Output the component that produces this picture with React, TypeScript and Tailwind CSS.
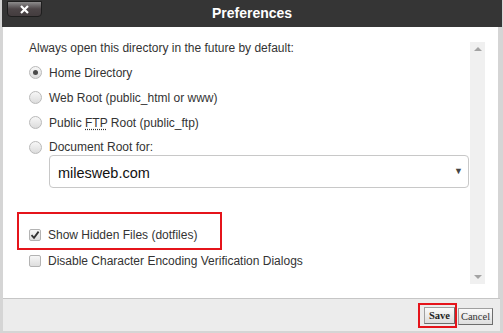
function Radio({ checked = false }: { checked?: boolean }) {
  return (
    <span className="flex h-[13px] w-[13px] shrink-0 items-center justify-center rounded-full border border-[#b9b9b9] bg-gradient-to-b from-[#f7f7f7] to-[#dcdcdc]">
      {checked && <span className="h-[5px] w-[5px] rounded-full bg-[#4a4a4a]" />}
    </span>
  );
}

function Checkbox({ checked = false }: { checked?: boolean }) {
  return (
    <span className="flex h-[12px] w-[12px] shrink-0 items-center justify-center rounded-[2px] border border-[#b3b3b3] bg-gradient-to-b from-[#f7f7f7] to-[#dedede]">
      {checked && (
        <svg width="10" height="10" viewBox="0 0 10 10">
          <path d="M1.5 5.2 L4 7.8 L8.6 1.6" fill="none" stroke="#333" strokeWidth="1.8" />
        </svg>
      )}
    </span>
  );
}

const dirs = [
  { label: "Home Directory", checked: true },
  { label: "Web Root (public_html or www)" },
];

export default function App() {
  return (
    <div className="relative h-[333px] w-[503px] overflow-hidden bg-[#d5d5d5] font-['Liberation_Sans',Arial,sans-serif] text-[12px] text-[#333]">
      {/* title bar */}
      <div className="relative ml-[2px] flex h-[27px] w-[500px] items-center justify-center bg-[#353535]">
        <button className="absolute left-[5px] top-[1px] flex h-[16px] w-[35px] items-center justify-center rounded-b-[4px] border border-[#1e1e1e] bg-gradient-to-b from-[#8d8d8d] via-[#4d4648] to-[#433c3e]">
          <svg width="9" height="9" viewBox="0 0 9 9">
            <path d="M1 1 L8 8 M8 1 L1 8" stroke="#fff" strokeWidth="2.2" />
          </svg>
        </button>
        <h1 className="text-[14px] font-bold text-white">Preferences</h1>
      </div>

      {/* body */}
      <div className="ml-[3px] flex h-[271px] w-[495px] bg-white">
        <div className="flex-1 pl-[14px] pt-[13px]">
          <p className="h-[20px] pl-[12px] leading-[16px]">
            Always open this directory in the future by default:
          </p>
          {dirs.map((d) => (
            <label key={d.label} className="flex h-[25px] items-center gap-[7px] pl-[12px]">
              <Radio checked={d.checked} />
              <span>{d.label}</span>
            </label>
          ))}
          <label className="flex h-[25px] items-center gap-[7px] pl-[12px]">
            <Radio />
            <span>
              Public <abbr className="underline decoration-dotted underline-offset-2">FTP</abbr> Root (public_ftp)
            </span>
          </label>
          <label className="flex h-[24px] items-center gap-[7px] pl-[12px]">
            <Radio />
            <span>Document Root for:</span>
          </label>
          <div className="-mt-[4px] ml-[32px] flex h-[33px] w-[420px] items-center justify-between rounded-[4px] border border-[#c8c8c8] pl-[8px] pr-[5px] pt-[4px]">
            <span className="text-[14.5px] text-[#111]">milesweb.com</span>
            <span className="-mt-[4px] text-[9px] text-[#444]">▼</span>
          </div>

          <div className="mt-[24px] flex h-[38px] w-[205px] items-center gap-[7px] border-2 border-[#e5141b] pl-[10px] pt-[8px]">
            <Checkbox checked />
            <span>Show Hidden Files (dotfiles)</span>
          </div>
          <label className="flex h-[21px] items-center gap-[7px] pl-[12px]">
            <Checkbox />
            <span>Disable Character Encoding Verification Dialogs</span>
          </label>
        </div>

        {/* scrollbar */}
        <div className="mb-[14px] mr-[13px] mt-[15px] flex w-[15px] flex-col items-center justify-between bg-[#f0f0f0] py-[5px]">
          <span className="h-0 w-0 border-x-[4px] border-b-[4px] border-x-transparent border-b-[#a3a3a3]" />
          <span className="h-0 w-0 border-x-[4px] border-t-[4px] border-x-transparent border-t-[#a3a3a3]" />
        </div>
      </div>

      {/* footer */}
      <div className="ml-[3px] flex h-[33px] w-[497px] items-start justify-end gap-[1px] border-t border-[#c6c6c6] bg-[#ececec] pr-[7px] pt-[4px] font-['Liberation_Serif',serif] text-[10.5px]">
        <div className="flex h-[25px] w-[39px] items-center justify-end border-2 border-[#e5141b]">
          <button className="flex h-[17px] w-[31px] items-center justify-center border border-[#a0a0a0] border-b-[#6d6d6d] border-r-[#6d6d6d] bg-gradient-to-b from-[#fafafa] to-[#dedede] font-bold text-[#222]">
            Save
          </button>
        </div>
        <button className="mt-[5px] flex h-[17px] w-[35px] items-center justify-center border border-[#a0a0a0] border-b-[#6d6d6d] border-r-[#6d6d6d] bg-gradient-to-b from-[#fafafa] to-[#dedede] text-[#333]">
          Cancel
        </button>
      </div>
    </div>
  );
}
